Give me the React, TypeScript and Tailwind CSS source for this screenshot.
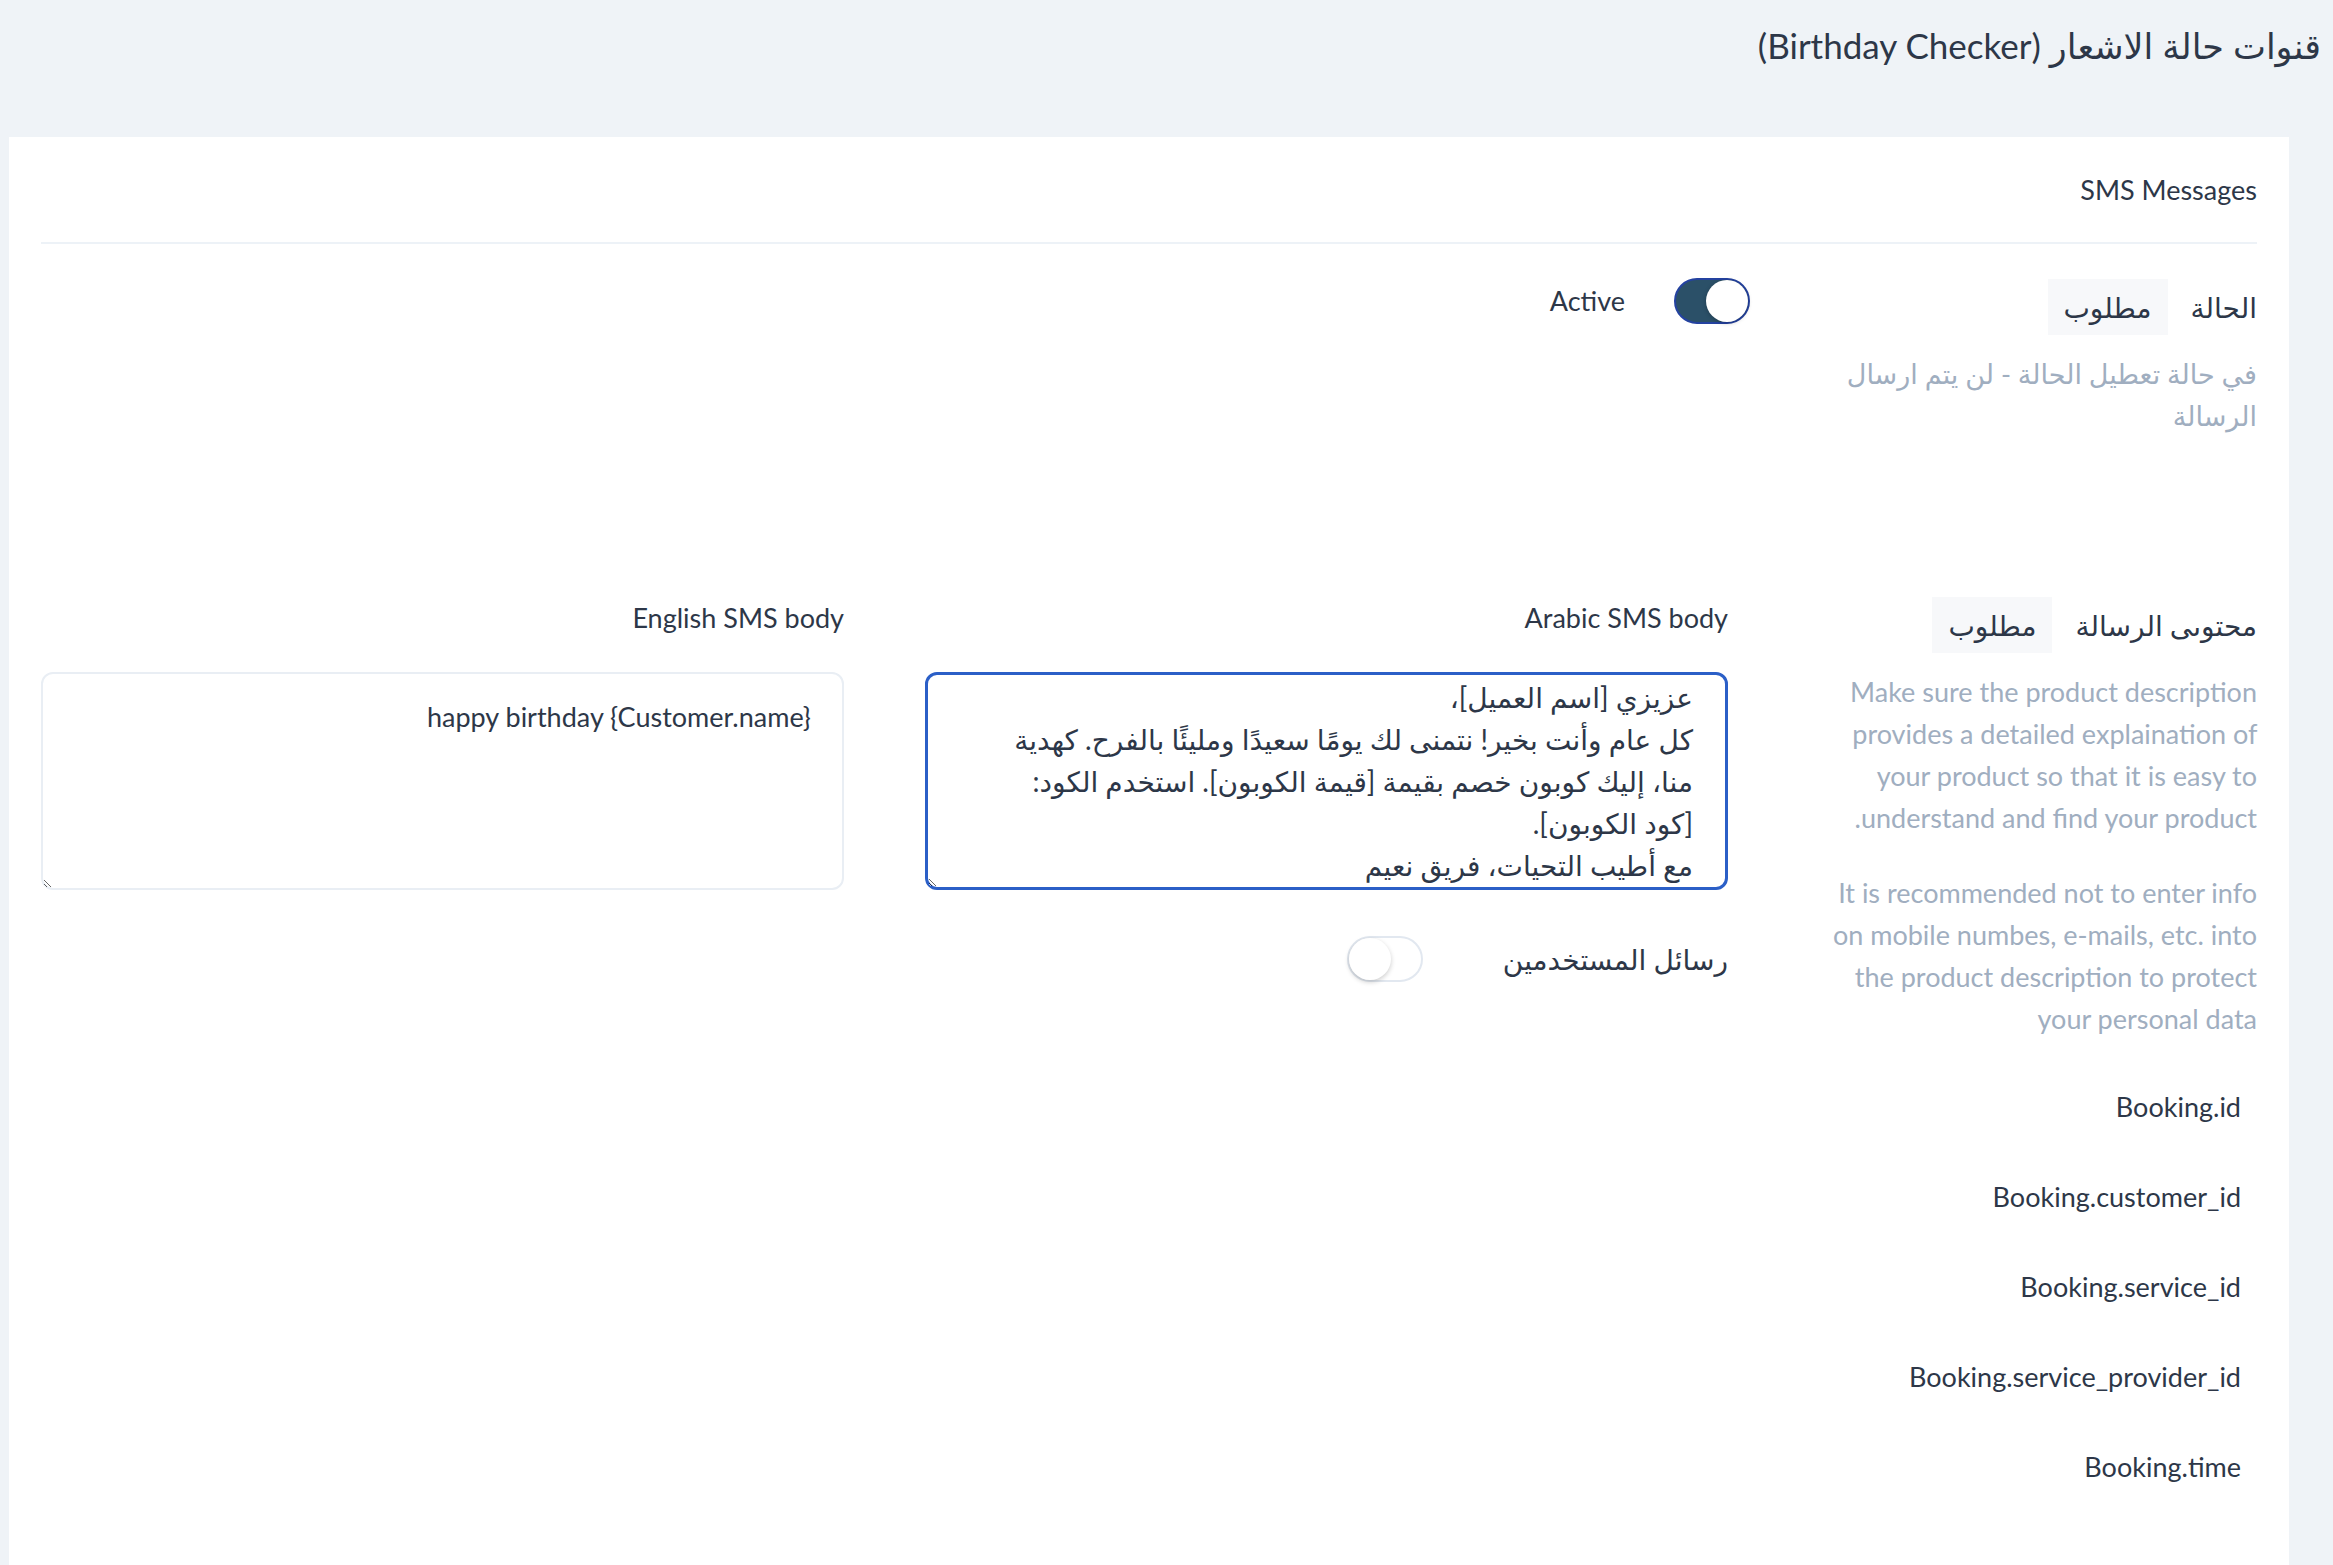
import React from "react";

const ARABIC_BODY =
  "عزيزي [اسم العميل]،\nكل عام وأنت بخير! نتمنى لك يومًا سعيدًا ومليئًا بالفرح. كهدية\nمنا، إليك كوبون خصم بقيمة [قيمة الكوبون]. استخدم الكود:\n[كود الكوبون].\nمع أطيب التحيات، فريق نعيم";

const VARIABLES = [
  "Booking.id",
  "Booking.customer_id",
  "Booking.service_id",
  "Booking.service_provider_id",
  "Booking.time",
];

function Toggle({ on }: { on: boolean }) {
  if (on) {
    return (
      <div className="flex h-[46px] w-[76px] shrink-0 items-center justify-start rounded-full border-2 border-[#2442a0] bg-[#2b5068]">
        <div className="h-[42px] w-[42px] rounded-full bg-white shadow-[0_1px_4px_rgba(0,0,0,0.25)]" />
      </div>
    );
  }
  return (
    <div className="flex h-[46px] w-[76px] shrink-0 items-center justify-end rounded-full border-2 border-[#e2e8f0] bg-white">
      <div className="h-[42px] w-[42px] rounded-full bg-white shadow-[0_2px_5px_rgba(0,0,0,0.2)]" />
    </div>
  );
}

function Required() {
  return (
    <span className="flex h-[56px] w-[120px] items-center justify-center bg-[#f7f8fa] text-[28px] text-[#2d3748]">
      مطلوب
    </span>
  );
}

export default function App() {
  return (
    <div
      dir="rtl"
      className="min-h-screen bg-[#eff3f7] font-['Lato','DejaVu_Sans',sans-serif] text-[#2d3748]"
    >
      {/* page title */}
      <div className="flex h-[137px] items-start pr-[12px] pt-[20px]">
        <h1 className="text-[35px] leading-[50px] font-normal">
          قنوات حالة الاشعار (Birthday Checker)
        </h1>
      </div>

      <div className="ml-[9px] mr-[44px] min-h-[1428px] bg-white px-[32px] pt-[32px]">
        <div className="text-[27px] leading-[42px]">SMS Messages</div>
        <div className="mt-[31px] h-[2px] bg-[#edf2f7]" />

        {/* status row */}
        <div className="mt-[35px] flex items-start gap-[47px]">
          <div className="w-[460px] shrink-0">
            <div className="flex items-center gap-[23px]">
              <span className="text-[28px] leading-[42px]">الحالة</span>
              <Required />
            </div>
            <p className="mt-[18px] max-w-[440px] text-[27px] leading-[42px] text-[#a0aec0]">
              في حالة تعطيل الحالة - لن يتم ارسال الرسالة
            </p>
          </div>
          <div className="-mt-[1px] flex items-center gap-[49px]">
            <Toggle on />
            <span className="text-[27px] leading-[42px]">Active</span>
          </div>
        </div>

        {/* message content row */}
        <div className="mt-[160px] flex items-start gap-[69px]">
          <div className="w-[460px] shrink-0">
            <div className="flex items-center gap-[23px]">
              <span className="text-[28px] leading-[42px]">محتوىى الرسالة</span>
              <Required />
            </div>
            <p className="mt-[18px] max-w-[440px] text-[27px] leading-[42px] text-[#a0aec0]">
              Make sure the product description provides a detailed explaination of
              your product so that it is easy to understand and find your product.
            </p>
            <p className="mt-[33px] max-w-[440px] text-[27px] leading-[42px] text-[#a0aec0]">
              It is recommended not to enter info on mobile numbes, e-mails, etc. into
              the product description to protect your personal data
            </p>
            <ul className="mt-[46px] flex flex-col gap-[48px] pr-[16px]">
              {VARIABLES.map((v) => (
                <li key={v} className="text-[27px] leading-[42px]">
                  {v}
                </li>
              ))}
            </ul>
          </div>

          <div className="grid flex-1 grid-cols-2 gap-[81px]">
            <div>
              <div className="text-[27px] leading-[42px]">Arabic SMS body</div>
              <textarea
                readOnly
                value={ARABIC_BODY}
                className="mt-[33px] h-[218px] w-full overflow-hidden rounded-[12px] border-[3px] border-[#2b5fc7] pl-[20px] pr-[32px] pt-[1px] text-[28px] leading-[42px] text-[#2d3748] outline-none"
              />
              <div className="mt-[40px] flex items-center gap-[80px]">
                <span className="text-[28px] leading-[42px]">رسائل المستخدمين</span>
                <Toggle on={false} />
              </div>
            </div>
            <div>
              <div className="text-[27px] leading-[42px]">English SMS body</div>
              <textarea
                readOnly
                value="happy birthday {Customer.name}"
                className="mt-[33px] h-[218px] w-full overflow-hidden rounded-[12px] border-2 border-[#e9eef4] pl-[20px] pr-[31px] pt-[22px] text-[27px] leading-[42px] text-[#2d3748] outline-none"
              />
            </div>
          </div>
        </div>
      </div>
    </div>
  );
}
